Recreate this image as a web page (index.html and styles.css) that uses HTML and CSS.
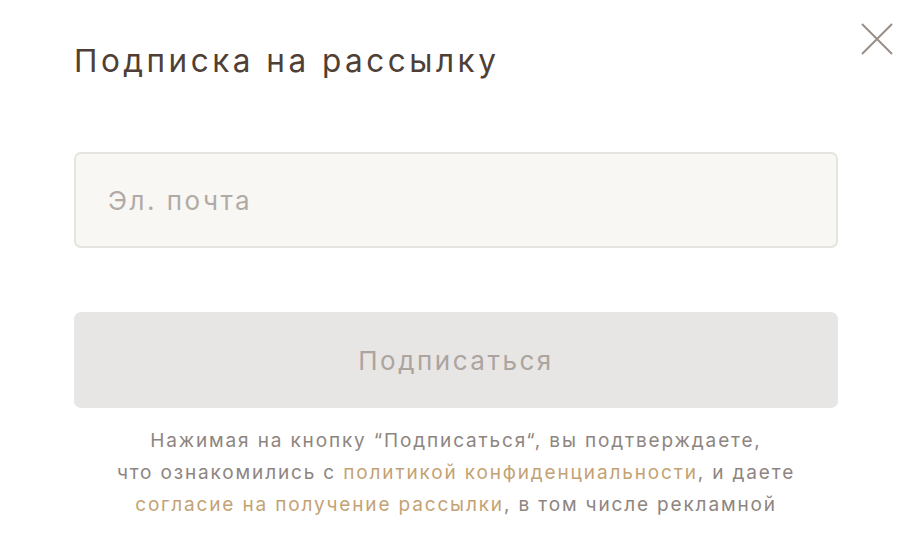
FILE: index.html
```html
<!DOCTYPE html>
<html lang="ru">
<head>
<meta charset="utf-8">
<link rel="stylesheet" href="styles.css">
</head>
<body>
<div class="modal">
  <button class="close" aria-label="Закрыть">
    <svg width="32" height="32" viewBox="0 0 32 32"><path d="M1 1L31 31M31 1L1 31" stroke="#9a8f88" stroke-width="2" fill="none"/></svg>
  </button>
  <h1 class="title">Подписка на рассылку</h1>
  <form class="form">
    <input class="email" type="text" placeholder="Эл. почта">
    <button class="submit" type="button">Подписаться</button>
    <p class="note">Нажимая на кнопку “Подписаться“, вы подтверждаете,<br>что ознакомились с <a href="#">политикой конфиденциальности</a>, и даете<br><a href="#">согласие на получение рассылки</a>, в том числе рекламной</p>
  </form>
</div>
</body>
</html>
```
FILE: styles.css
```css
* { box-sizing: border-box; }
html, body { margin: 0; padding: 0; background: #fff; }
body { width: 924px; height: 550px; overflow: hidden; font-family: Inter, "Noto Sans", sans-serif; }
.modal { position: relative; padding: 39px 86px 0 74px; }
.close { position: absolute; top: 23px; left: 861px; width: 32px; height: 32px; padding: 0; border: 0; background: none; }
.close svg { display: block; }
.title { margin: 0; font-weight: 400; font-size: 31.5px; line-height: 44px; color: #4f3f36; letter-spacing: 3.5px; }
.form { display: flex; flex-direction: column; margin-top: 69px; }
.email { height: 96px; border: 2px solid #e6e4e0; border-radius: 7px; background: #f8f7f4; padding: 0 32px; font-family: inherit; font-size: 26px; letter-spacing: 2.5px; color: #4f3f36; outline: none; }
.email::placeholder { color: #b1aaa5; }
.submit { margin-top: 64px; height: 96px; border: 0; border-radius: 7px; background: #e8e6e4; font-family: inherit; font-size: 26px; letter-spacing: 2.5px; color: #aca49f; }
.note { margin: 17px 0 0; text-align: center; font-size: 19px; line-height: 32px; letter-spacing: 1.85px; color: #8e8580; }
.note a { color: #c4a274; text-decoration: none; }
```
